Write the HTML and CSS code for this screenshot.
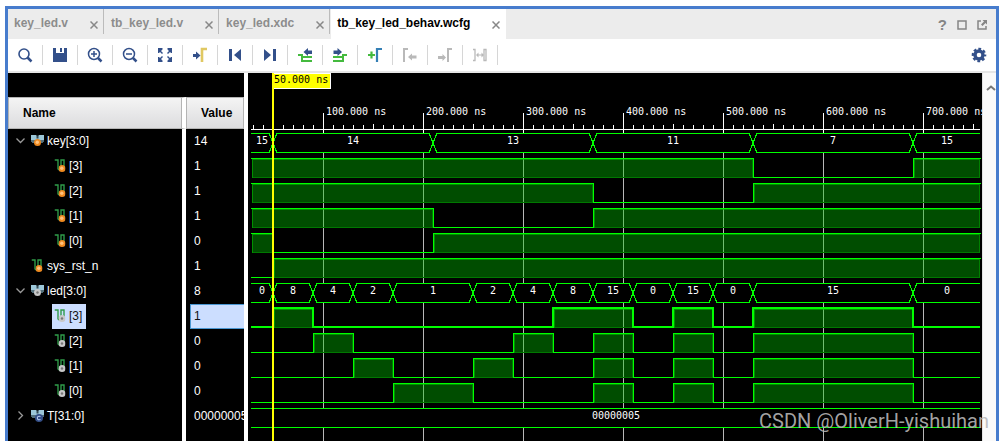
FILE: index.html
```html
<!DOCTYPE html>
<html lang="en">
<head>
<meta charset="utf-8">
<title>tb_key_led_behav.wcfg</title>
<link rel="stylesheet" href="styles.css">
</head>
<body>
<svg class="defs" aria-hidden="true">
  <symbol id="close" viewBox="0 0 8 8"><path d="M.5.5l7 7M7.5.5l-7 7" fill="none" stroke="currentColor" stroke-width="1.5"/></symbol>
  <symbol id="bus" viewBox="0 0 13 13"><path d="M0 1h5l1 1h1l1-1h5v6l-2 2H2L0 7z" fill="#9cc7d8"/><path d="M0 6h13v1l-2 2H2L0 7z" fill="#54707c"/><path d="M5.500 1.500h2v3h-2z" fill="#324650"/></symbol>
  <symbol id="bit" viewBox="0 0 12 13"><path d="M0 1h3.500v9.500M6.500 10V1h3v7M3.500 10.500h3" fill="none" stroke="#2f9a48" stroke-width="1.400"/></symbol>
  <symbol id="in" viewBox="0 0 7 7"><circle cx="3.5" cy="3.5" r="3.5" fill="#ee8a20"/><circle cx="3.3" cy="3.2" r="1.700" fill="#ffc27c"/></symbol>
  <symbol id="out" viewBox="0 0 7 7"><circle cx="3.5" cy="3.5" r="3.5" fill="#c8c8c8"/><circle cx="3.5" cy="3.5" r="1.2" fill="#777"/></symbol>
  <symbol id="const" viewBox="0 0 7 7"><circle cx="3.5" cy="3.5" r="3.5" fill="#344f88"/><path d="M4.8 2.4a1.6 1.6 0 1 0 0 2.2" fill="none" stroke="#b9cdf0" stroke-width=".9"/></symbol>
  <symbol id="bus-in" viewBox="0 0 13 13"><use href="#bus" width="13" height="13"/><use href="#in" x="3" y="5" width="7" height="7"/></symbol>
  <symbol id="bus-out" viewBox="0 0 13 13"><use href="#bus" width="13" height="13"/><use href="#out" x="3" y="5" width="7" height="7"/></symbol>
  <symbol id="bus-const" viewBox="0 0 13 13"><use href="#bus" width="13" height="13"/><use href="#const" x="4" y="5" width="8" height="8"/></symbol>
  <symbol id="bit-in" viewBox="0 0 12 13"><use href="#bit" width="12" height="13"/><use href="#in" x="4" y="6" width="7" height="7"/></symbol>
  <symbol id="bit-out" viewBox="0 0 12 13"><use href="#bit" width="12" height="13"/><use href="#out" x="4" y="6" width="7" height="7"/></symbol>
  <symbol id="open" viewBox="0 0 9 9"><path d="M.5 2.5l4 4 4-4" fill="none" stroke="#9a9a9a" stroke-width="1.3"/></symbol>
  <symbol id="shut" viewBox="0 0 9 9"><path d="M2.5.5l4 4-4 4" fill="none" stroke="#9a9a9a" stroke-width="1.3"/></symbol>
</svg>

<main class="frame">
  <header class="tabs">
    <div class="tab"><button class="tab-name">key_led.v</button><button class="x" aria-label="Close key_led.v"><svg><use href="#close"/></svg></button></div>
    <div class="tab"><button class="tab-name">tb_key_led.v</button><button class="x" aria-label="Close tb_key_led.v"><svg><use href="#close"/></svg></button></div>
    <div class="tab"><button class="tab-name">key_led.xdc</button><button class="x" aria-label="Close key_led.xdc"><svg><use href="#close"/></svg></button></div>
    <div class="tab active"><button class="tab-name">tb_key_led_behav.wcfg</button><button class="x" aria-label="Close tb_key_led_behav.wcfg"><svg><use href="#close"/></svg></button></div>
    <div class="window-tools">
      <button aria-label="Help">?</button>
      <button aria-label="Maximize"><svg viewBox="0 0 10 10"><path d="M1 1h8v8H1z" fill="none" stroke="currentColor" stroke-width="1.5"/></svg></button>
      <button aria-label="Float"><svg viewBox="0 0 10 10"><path d="M4 1H1v8h8V6" fill="none" stroke="currentColor" stroke-width="1.5"/><path d="M5.500 0H10v4.500L8.500 3 5.500 6 4 4.500 7 1.500z" fill="currentColor"/></svg></button>
    </div>
  </header>

  <nav class="toolbar">
    <button aria-label="Find"><svg viewBox="0 0 16 16"><circle cx="7" cy="7" r="5" fill="none" stroke="#33508a" stroke-width="1.6"/><path d="M10.500 10.500l4 4" stroke="#33508a" stroke-width="2.500"/></svg></button>
    <button aria-label="Save"><svg viewBox="0 0 16 16"><path d="M1 1h3v5h8V1h3v14H1zM8 1h2v4H8z" fill="#33508a"/></svg></button>
    <button aria-label="Zoom in"><svg viewBox="0 0 16 16"><circle cx="7" cy="7" r="5.500" fill="none" stroke="#33508a" stroke-width="1.500"/><path d="M11 11l3.500 3.500" stroke="#33508a" stroke-width="2.500"/><path d="M4 7h6M7 4v6" stroke="#33508a" stroke-width="1.500"/></svg></button>
    <button aria-label="Zoom out"><svg viewBox="0 0 16 16"><circle cx="7" cy="7" r="5.500" fill="none" stroke="#33508a" stroke-width="1.500"/><path d="M11 11l3.500 3.500" stroke="#33508a" stroke-width="2.500"/><path d="M4 7h6" stroke="#33508a" stroke-width="1.500"/></svg></button>
    <button aria-label="Zoom fit"><svg viewBox="0 0 16 16"><path d="M1 1h4.500v1.500L4 4v0l2 2-1 1-2-2-1 1H1zM15 1v5h-1l-1-1-2 2-1-1 2-2-1.500-1.500V1zM1 15v-5h1l1 1 2-2 1 1-2 2 1.500 1.500V15zM15 15h-4.500v-1.500L12 12l-2-2 1-1 2 2 1-1h1z" fill="#33508a"/></svg></button>
    <button aria-label="Zoom to cursor"><svg viewBox="0 0 16 16"><path d="M10 15V2h5" fill="none" stroke="#e0c862" stroke-width="2.600"/><path d="M1 7h3V4.500L8.500 8.500 4 12.500V10H1z" fill="#33508a"/></svg></button>
    <button aria-label="Go to time 0"><svg viewBox="0 0 16 16"><path d="M2 2h3v12H2zM14 2v12L7 8z" fill="#33508a"/></svg></button>
    <button aria-label="Go to last time"><svg viewBox="0 0 16 16"><path d="M11 2h3v12h-3zM2 2v12l7-6z" fill="#33508a"/></svg></button>
    <button aria-label="Previous transition"><svg viewBox="0 0 16 16"><path d="M1 8h4v6h10M5 10h10" fill="none" stroke="#44ba3e" stroke-width="2"/><path d="M6.500 5L11 1v2.500h4v3.500h-4v2z" fill="#33508a"/></svg></button>
    <button aria-label="Next transition"><svg viewBox="0 0 16 16"><path d="M1 10h9M1 14h10V8h4" fill="none" stroke="#44ba3e" stroke-width="2"/><path d="M10 5L5.500 1v2.500h-4v3.500h4v2z" fill="#33508a"/></svg></button>
    <button aria-label="Add marker"><svg viewBox="0 0 16 16"><path d="M10 15V2h5" fill="none" stroke="#347fb5" stroke-width="2.200"/><path d="M1 8h7M4.500 4.500v7" stroke="#44ba3e" stroke-width="2.200"/></svg></button>
    <button aria-label="Previous marker" disabled><svg viewBox="0 0 16 16"><path d="M2 15V2h4" fill="none" stroke="#b9b9b9" stroke-width="2"/><path d="M6 10l4-3.500V8.500h4.500v3H10v2z" fill="#b9b9b9"/></svg></button>
    <button aria-label="Next marker" disabled><svg viewBox="0 0 16 16"><path d="M11 15V2h4" fill="none" stroke="#b9b9b9" stroke-width="2"/><path d="M9 10.500L5.500 7V9H1v3h4.500v2z" fill="#b9b9b9"/></svg></button>
    <button aria-label="Swap cursors" disabled><svg viewBox="0 0 16 16"><path d="M1 2.500h2v11H1M12 2.500h2v11h-2z" fill="none" stroke="#b9b9b9" stroke-width="1.300"/><path d="M4 8l2.500-2.500v2h3v-2L12 8l-2.500 2.500v-2h-3v2z" fill="#b9b9b9"/></svg></button>
    <button class="settings" aria-label="Settings"><svg viewBox="0 0 16 16"><circle cx="8" cy="8" r="4" fill="none" stroke="#33508a" stroke-width="3.400"/><circle cx="8" cy="8" r="6" fill="none" stroke="#33508a" stroke-width="2.600" stroke-dasharray="2.700 2.012" stroke-dashoffset="1.350"/></svg></button>
  </nav>

  <section class="viewer">
    <div class="signals">
      <table>
        <thead><tr><th class="name">Name</th><th class="value">Value</th></tr></thead>
        <tbody>
          <tr><td><span class="node"><svg class="arrow"><use href="#open"/></svg><svg class="kind"><use href="#bus-in"/></svg>key[3:0]</span></td><td>14</td></tr>
          <tr><td><span class="node bit"><svg class="kind"><use href="#bit-in"/></svg>[3]</span></td><td>1</td></tr>
          <tr><td><span class="node bit"><svg class="kind"><use href="#bit-in"/></svg>[2]</span></td><td>1</td></tr>
          <tr><td><span class="node bit"><svg class="kind"><use href="#bit-in"/></svg>[1]</span></td><td>1</td></tr>
          <tr><td><span class="node bit"><svg class="kind"><use href="#bit-in"/></svg>[0]</span></td><td>0</td></tr>
          <tr><td><span class="node"><span class="arrow"></span><svg class="kind"><use href="#bit-in"/></svg>sys_rst_n</span></td><td>1</td></tr>
          <tr><td><span class="node"><svg class="arrow"><use href="#open"/></svg><svg class="kind"><use href="#bus-out"/></svg>led[3:0]</span></td><td>8</td></tr>
          <tr class="selected"><td><span class="node bit"><svg class="kind"><use href="#bit-out"/></svg>[3]</span></td><td><span class="cell">1</span></td></tr>
          <tr><td><span class="node bit"><svg class="kind"><use href="#bit-out"/></svg>[2]</span></td><td>0</td></tr>
          <tr><td><span class="node bit"><svg class="kind"><use href="#bit-out"/></svg>[1]</span></td><td>0</td></tr>
          <tr><td><span class="node bit"><svg class="kind"><use href="#bit-out"/></svg>[0]</span></td><td>0</td></tr>
          <tr><td><span class="node"><svg class="arrow"><use href="#shut"/></svg><svg class="kind"><use href="#bus-const"/></svg>T[31:0]</span></td><td>00000005</td></tr>
          <tr class="rest"><td></td><td></td></tr>
        </tbody>
      </table>
    </div>
    <div class="wave" id="wave"></div>
    <div class="scroll"><button aria-label="Scroll up"><svg viewBox="0 0 10 6"><path d="M1 5l4-3.500L9 5" fill="none" stroke="#777" stroke-width="2"/></svg></button></div>
    <div class="credit">CSDN @OliverH-yishuihan</div>
  </section>
</main>
<script src="wave.js"></script>
</body>
</html>
```
FILE: styles.css
```css
* { box-sizing: border-box; }
body {
  margin: 0;
  min-height: 100vh;
  display: flex;
  background: #fff;
  font: 12px/16px "Liberation Sans", Arial, sans-serif;
  color: #111;
}
button { border: 0; padding: 0; background: none; font: inherit; color: inherit; }
svg { display: block; }
.defs { position: absolute; width: 0; height: 0; }

.frame {
  flex: 1;
  min-width: 0;
  display: flex;
  flex-direction: column;
  margin: 6px 5px 0;
  border: 3px solid #477ccd;
  border-bottom: 0;
}

.tabs { display: flex; height: 30px; background: #ececec; color: #8c8c8c; font-weight: bold; }
.tab { position: relative; display: flex; align-items: center; gap: 22px; padding: 0 6px 2px; }
.tab + .tab { border-left: 1px solid #ececec; }
.tab:not(.active)::after { content: ""; position: absolute; right: 0; top: 0; width: 1px; height: 25px; background: #bbb; }
.tab.active { background: #fff; color: #000; }
.tab .x { color: #888; padding-top: 4px; }
.x svg { width: 8px; height: 8px; }
.window-tools { display: flex; align-items: center; gap: 10px; margin-left: auto; padding: 2px 9px 0 0; color: #858585; font-size: 15px; }
.window-tools svg { width: 10px; height: 10px; }

.toolbar { display: flex; align-items: center; height: 34px; border-bottom: 2px solid #e6e6e6; }
.toolbar button { width: 35px; height: 20px; display: flex; align-items: center; justify-content: center; border-right: 1px solid #d6d6d6; }
.toolbar svg { width: 16px; height: 16px; }
.toolbar .settings { margin-left: auto; border: 0; }

.viewer { position: relative; flex: 1; display: flex; }
.signals { width: 236px; padding-top: 24px; background: #000; color: #fff; overflow: hidden; }
table { width: 100%; height: 100%; table-layout: fixed; border-collapse: separate; border-spacing: 0; }
th { height: 32px; padding: 0 0 0 14px; text-align: left; color: #000; border: 1px solid #b4b4b4; background: linear-gradient(#f4f4f4, #dcdcde); }
th.name { width: 178px; background-clip: padding-box; box-shadow: inset -1px 0 #b4b4b4; border-right: 4px solid #fff; }
th.value { width: 58px; }
td { height: 25px; padding: 0 0 2px 8px; white-space: nowrap; overflow: hidden; }
td:first-child { padding-bottom: 0; border-right: 4px solid #fff; }
.rest td { height: auto; padding: 0; }
.node { display: inline-flex; align-items: center; height: 25px; padding-bottom: 2px; vertical-align: top; }
.node.bit { margin-left: 36px; padding: 0 4px 2px 2px; }
.arrow { width: 9px; height: 9px; margin-right: 6px; }
.kind { width: 13px; height: 13px; margin-right: 3px; }
.node.bit .kind { margin-right: 2px; }
.selected .node { background: #ccdeff; color: #111; }
.selected td:last-child { padding: 0 0 0 4px; }
.cell { display: block; height: 25px; padding: 4px 3px; border: 1px solid #4a97d2; border-right: 0; background: #ccdeff; color: #111; line-height: 15px; }

.wave { flex: 1; min-width: 0; margin-left: 4px; background: #000; overflow: hidden; }
.wave text { font: 10px "DejaVu Sans Mono", monospace; fill: #fff; }
.wave .cursor-text { fill: #000; }
.wave .mid { text-anchor: middle; }
.scroll { width: 14px; padding: 6px 0 0 3px; background: #fafafa; border-left: 1px solid #e4e4e4; }
.scroll svg { width: 10px; height: 6px; }
.credit { position: absolute; right: 7px; bottom: 7px; font: 20px/26px Roboto, sans-serif; color: rgba(185, 185, 185, .9); }
```
FILE: wave.js
```
const pane = document.getElementById("wave");
const START = 3, ORIGIN = -25, TOP = 56, ROW = 25;
const LINE = "#00ff00";

const keyTimes = [50, 210, 370, 530, 690];
const ledTimes = [50, 90, 130, 170, 250, 290, 330, 370, 410, 450, 490, 530, 690];
const rows = [
  { bus: keyTimes, values: ["15", "14", "13", "11", "7", "15"] },
  { high: [[0, 530], [690, 9999]] },
  { high: [[0, 370], [530, 9999]] },
  { high: [[0, 210], [370, 9999]] },
  { high: [[0, 50], [210, 9999]] },
  { high: [[50, 9999]] },
  { bus: ledTimes, values: ["0", "8", "4", "2", "1", "2", "4", "8", "15", "0", "15", "0", "15", "0"] },
  { high: [[50, 90], [330, 410], [450, 490], [530, 690]], thick: true },
  { high: [[90, 130], [290, 330], [370, 410], [450, 490], [530, 690]] },
  { high: [[130, 170], [250, 290], [370, 410], [450, 490], [530, 690]] },
  { high: [[170, 250], [370, 410], [450, 490], [530, 690]] },
  { bus: [], values: ["00000005"] }
];

function rect(x, y, w, h, fill) {
  return `<rect x="${x}" y="${y}" width="${w}" height="${h}" fill="${fill}"/>`;
}

function drawBus(row, y, end) {
  let out = rect(0, y + 4, end + 2, 20, "#000");
  const edges = [START, ...row.bus.map(t => t + ORIGIN), end];
  for (let i = 0; i < edges.length - 1; i++) {
    const a = edges[i] + (i ? 4 : 0);
    const b = edges[i + 1] - (i < edges.length - 2 ? 4 : 0);
    out += rect(a, y + 4, b - a, 1, LINE) + rect(a, y + 23, b - a, 1, LINE);
    if (i) {
      const x = edges[i];
      out += `<path d="M${x - 4} ${y + 4}L${x + 4} ${y + 24}M${x + 4} ${y + 4}L${x - 4} ${y + 24}" stroke="${LINE}" shape-rendering="crispEdges"/>`;
    }
    out += `<text class="mid" x="${Math.round((edges[i] + edges[i + 1]) / 2)}" y="${y + 15}">${row.values[i]}</text>`;
  }
  return out;
}

function drawBit(row, y, end) {
  const w = row.thick ? 2 : 1;
  const top = row.thick ? y + 3 : y + 4;
  const low = row.thick ? y + 22 : y + 23;
  let out = "", x = START;
  for (const [from, to] of row.high) {
    const a = Math.max(START, from + ORIGIN), b = Math.min(end, to + ORIGIN);
    const bottom = y + 24;
    if (a > x) out += rect(x, low, a - x, w, LINE);
    out += rect(a + 1, top + w, b - a - 1, bottom - top - w, "rgba(0,200,0,.385)");
    out += rect(a + 1, top + w, b - a - 1, 1, "rgba(0,190,0,.6)");
    out += rect(a + 1, bottom - 1, b - a - 1, 1, "#007800");
    out += rect(a + 1, top + w, 1, bottom - top - w, "#009000");
    out += rect(b - 1, top + w, 1, bottom - top - w, "#008000");
    out += rect(a, top, b - a + 1, w, LINE);
    if (a > START) out += rect(a + 1 - w, top, w, bottom - top, LINE);
    if (b < end) out += rect(b + 1 - w, top, w, bottom - top, LINE);
    x = b;
  }
  if (x < end) out += rect(x, low, end - x, w, LINE);
  return out;
}

function draw() {
  const width = pane.clientWidth, height = pane.clientHeight, end = width - 2;
  let out = "";
  for (let t = 100; t + ORIGIN < end; t += 100) {
    out += rect(t + ORIGIN, 40, 1, height - 40, "#b8b8b8") + rect(t + ORIGIN, 40, 1, 20, "#fff");
    out += `<text x="${t + ORIGIN + 3}" y="42">${t}.000 ns</text>`;
  }
  for (let t = 30; t + ORIGIN < end; t += 10) {
    const h = t % 50 ? 4 : 5;
    out += rect(t + ORIGIN, 56 - h, 1, h, "#fff");
  }
  out += rect(START, 56, end - START, 1, "#fff");
  rows.forEach((row, i) => {
    const y = TOP + i * ROW;
    out += row.bus ? drawBus(row, y, end) : drawBit(row, y, end);
  });
  out += rect(24, 0, 59, 16, "#fff") + rect(24, 1, 58, 14, "#ffff00") + rect(24, 0, 2, height, "#ffff00");
  out += `<text class="cursor-text" x="26" y="10">50.000 ns</text>`;
  pane.innerHTML = `<svg width="${width}" height="${height}" role="img" aria-label="Waveform">${out}</svg>`;
}

draw();
window.addEventListener("resize", () => { pane.innerHTML = ""; draw(); });
```
